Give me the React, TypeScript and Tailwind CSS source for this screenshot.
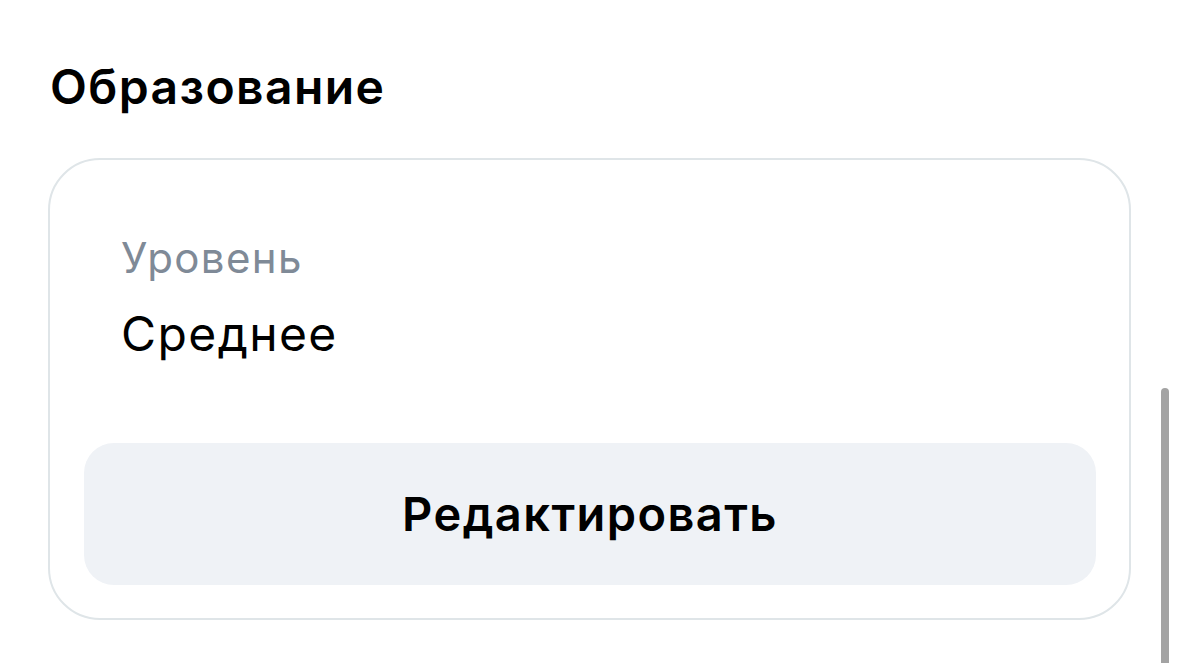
import React from 'react'

export default function App() {
  return (
    <div className="h-[663px] w-[1179px] overflow-hidden bg-white relative" style={{ fontFamily: 'Inter, "Noto Sans", sans-serif' }}>
      <div className="pl-12 pr-[48px] pt-[59px]">
        <h2 className="pl-[2px] text-[48px] leading-[56px] font-semibold text-black tracking-[1.4px]">Образование</h2>
        <div className="mt-[43px] h-[462px] rounded-[52px] border-2 border-[#dfe5e8] pl-[34px] pr-[33px] pt-[73px] pb-[33px] flex flex-col">
          <div className="pl-[37px]">
            <p className="text-[42px] leading-[50px] text-[#7f8a97] tracking-[1.4px]">Уровень</p>
            <p className="mt-[23px] text-[48px] leading-[56px] text-black tracking-[1.4px]">Среднее</p>
          </div>
          <button className="mt-auto h-[142px] w-full rounded-[30px] bg-[#eff2f6] text-[47px] font-semibold text-black tracking-[1.4px]">
            Редактировать
          </button>
        </div>
      </div>
      <div className="absolute left-[1161px] top-[388px] h-[300px] w-[8px] rounded-full bg-[#a3a3a3]" />
    </div>
  )
}
